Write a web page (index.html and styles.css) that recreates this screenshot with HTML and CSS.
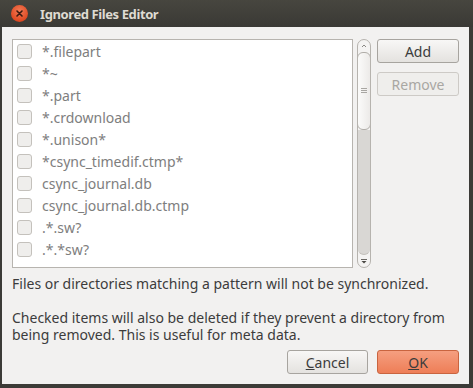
FILE: index.html
```html
<!DOCTYPE html>
<html lang="en">
<head>
    <meta charset="UTF-8">
    <title>Ignored Files Editor</title>
    <link rel="stylesheet" href="styles.css">
</head>
<body>
    <div class="window">
        <div class="titlebar">
            <span class="close-btn">
                <svg width="17" height="17" viewBox="0 0 17 17">
                    <path d="M6 6l5 5M11 6l-5 5" stroke="#3a1a10" stroke-width="1.6" stroke-linecap="round"/>
                </svg>
            </span>
            <span class="title">Ignored Files Editor</span>
        </div>

        <div class="content">
            <div class="top-row">
                <div class="list">
                    <div class="row"><span class="check"></span>*.filepart</div>
                    <div class="row"><span class="check"></span>*~</div>
                    <div class="row"><span class="check"></span>*.part</div>
                    <div class="row"><span class="check"></span>*.crdownload</div>
                    <div class="row"><span class="check"></span>*.unison*</div>
                    <div class="row"><span class="check"></span>*csync_timedif.ctmp*</div>
                    <div class="row"><span class="check"></span>csync_journal.db</div>
                    <div class="row"><span class="check"></span>csync_journal.db.ctmp</div>
                    <div class="row"><span class="check"></span>.*.sw?</div>
                    <div class="row"><span class="check"></span>.*.*sw?</div>
                </div>

                <div class="scrollbar">
                    <div class="sb-btn">
                        <svg width="14" height="12" viewBox="0 0 14 12"><path d="M5 7l2-2 2 2" stroke="#8a8884" stroke-width="1" fill="none"/></svg>
                    </div>
                    <div class="sb-thumb">
                        <svg width="6" height="6" viewBox="0 0 6 6"><path d="M0 0.5h6M0 2.5h6M0 4.5h6" stroke="#a8a6a2" stroke-width="1"/></svg>
                    </div>
                    <div class="sb-track"></div>
                    <div class="sb-btn">
                        <svg width="14" height="12" viewBox="0 0 14 12"><path d="M4 4.5h6" stroke="#6a6864"/><path d="M4.5 6h5l-2.5 2.5z" fill="#4a4844"/></svg>
                    </div>
                </div>

                <div class="side-buttons">
                    <button class="btn">Add</button>
                    <button class="btn disabled">Remove</button>
                </div>
            </div>

            <div class="info">
                <p>Files or directories matching a pattern will not be synchronized.</p>
                <p>Checked items will also be deleted if they prevent a directory from being removed. This is useful for meta data.</p>
            </div>

            <div class="bottom-row">
                <button class="btn wide"><u>C</u>ancel</button>
                <button class="btn ok"><u>O</u>K</button>
            </div>
        </div>
    </div>
</body>
</html>
```

FILE: styles.css
```css
body {
    margin: 0;
    font-family: 'Noto Sans', 'Open Sans', sans-serif;
    font-size: 14px;
    background: #3c3b37;
}

.window {
    width: 473px;
    height: 388px;
    background: #3c3b37;
    display: flex;
    flex-direction: column;
}

.titlebar {
    height: 27px;
    background: linear-gradient(#47463f, #3a3935);
    display: flex;
    align-items: center;
    padding-left: 11px;
}

.close-btn {
    width: 17px;
    height: 17px;
    border-radius: 50%;
    background: radial-gradient(circle at 50% 35%, #f27a55, #df4a23 70%, #b8381a);
    display: flex;
    align-items: center;
    justify-content: center;
}

.title {
    margin-left: 12px;
    color: #dfdbd2;
    font-weight: bold;
    font-size: 13px;
    letter-spacing: -0.4px;
}

.content {
    flex: 1;
    margin: 0 4px 4px 2px;
    background: #f2f1f0;
    padding: 12px 10px 10px 10px;
    display: flex;
    flex-direction: column;
}

.top-row {
    display: flex;
    height: 229px;
}

.list {
    width: 341px;
    box-sizing: border-box;
    background: #fff;
    border: 1px solid #b7b4af;
    overflow: hidden;
}

.row {
    height: 22px;
    display: flex;
    align-items: center;
    color: #7e7e7e;
}

.check {
    width: 13px;
    height: 13px;
    margin: 0 10px 0 4px;
    border: 1px solid #c4c1bc;
    border-radius: 3px;
    background: #efeeec;
}

.scrollbar {
    width: 14px;
    margin-left: 4px;
    box-sizing: border-box;
    border: 1px solid #b6b3ae;
    border-radius: 7px;
    background: #f4f3f2;
    display: flex;
    flex-direction: column;
    overflow: hidden;
}

.sb-btn {
    height: 12px;
    display: flex;
    align-items: center;
    justify-content: center;
}

.sb-btn svg {
    flex: none;
}

.sb-thumb {
    height: 78px;
    box-sizing: border-box;
    border: 1px solid #b0ada8;
    border-radius: 6px;
    margin: 0 -1px;
    background: linear-gradient(to right, #fbfbfa, #eceae8);
    display: flex;
    align-items: center;
    justify-content: center;
}

.sb-track {
    flex: 1;
    background: #d9d7d4;
    border-radius: 0 0 6px 6px;
    border-bottom: 1px solid #c2bfba;
}

.side-buttons {
    margin-left: 6px;
    display: flex;
    flex-direction: column;
    gap: 9px;
}

.btn {
    width: 82px;
    height: 24px;
    font-family: inherit;
    font-size: 14px;
    color: #3c3c3c;
    border: 1px solid #a7a49f;
    border-radius: 3px;
    background: linear-gradient(#f8f7f6, #e4e2df);
    padding: 0;
}

.btn.disabled {
    color: #a9a7a3;
    border-color: #cdcac6;
    background: #efeeec;
}

.info {
    margin-top: 7px;
    color: #3c3c3c;
    line-height: 17px;
}

.info p {
    margin: 0 0 17px 0;
}

.info p:last-child {
    margin-bottom: 0;
}

.bottom-row {
    margin-top: auto;
    display: flex;
    justify-content: flex-end;
    gap: 9px;
}

.btn.wide {
    width: 81px;
}

.btn.ok {
    border-color: #c9643f;
    background: linear-gradient(#f59f80, #ee7e57);
}
```
